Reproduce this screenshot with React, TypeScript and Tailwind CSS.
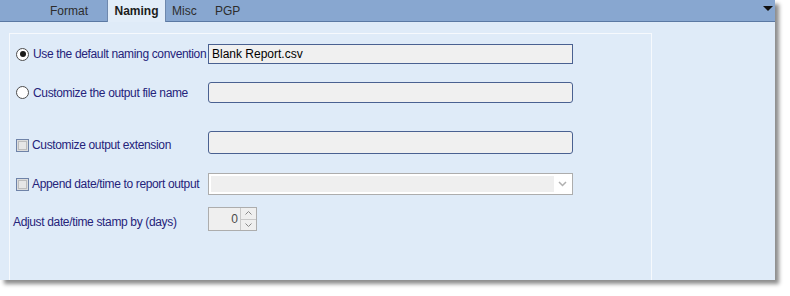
import { ReactNode } from "react";

const labelCls = "text-[12px] text-[#25237a] tracking-[-0.35px] whitespace-nowrap";

function Radio({ checked }: { checked?: boolean }) {
  return (
    <span className="w-[13px] h-[13px] rounded-full border border-[#4d4d4d] bg-white flex items-center justify-center shrink-0">
      {checked && <span className="w-[6px] h-[6px] rounded-full bg-[#1a1a1a]" />}
    </span>
  );
}

function Check() {
  return (
    <span className="w-[13px] h-[13px] border border-[#6f83a8] bg-[#dcdcdc] shrink-0 flex items-center justify-center">
      <span className="w-[9px] h-[9px] border border-[#bdbdbd] bg-[#e6e6e6]" />
    </span>
  );
}

function Row({ left, children, className }: { left: ReactNode; children?: ReactNode; className: string }) {
  return (
    <div className={`grid grid-cols-[192px_365px] ${className}`}>
      {left}
      {children}
    </div>
  );
}

export default function App() {
  return (
    <div className="w-[790px] h-[296px] bg-white relative" style={{ fontFamily: '"Liberation Sans", Arial, sans-serif' }}>
      <div className="w-[775px] h-[280px] bg-[#dfebf8] flex flex-col shadow-[4px_4px_4px_rgba(0,0,0,0.45)]">
        {/* tab strip */}
        <div className="h-[22px] bg-[#88a7d0] border-b border-[#5b79a3] flex items-end relative shrink-0">
          <div className="w-[107px] h-full flex items-center justify-end pr-[19px] text-[12px] text-[#2d2d2d]">Format</div>
          <div className="w-[59px] h-[22px] -mb-px bg-[#e2edf9] border-x border-[#6e88ad] flex items-center justify-center text-[12px] font-bold text-[#1c1c1c]">
            Naming
          </div>
          <div className="w-[49px] h-full flex items-center pl-[6px] text-[12px] text-[#2d2d2d]">Misc</div>
          <div className="h-full flex items-center text-[12px] text-[#2d2d2d]">PGP</div>
          <svg className="absolute right-[2px] top-[6px]" width="10" height="6" viewBox="0 0 10 6">
            <polygon points="0,0 10,0 5,5" fill="#111" />
          </svg>
        </div>

        {/* body */}
        <div className="flex-1 pl-[9px] pt-[11px] flex">
          <div className="w-[643px] h-full border-t border-x border-[#f6f9fd] flex flex-col pl-[6px]">
            <Row className="mt-[10px] h-[20px]" left={
              <div className="flex items-center gap-[4px]">
                <Radio checked />
                <span className={labelCls}>Use the default naming convention</span>
              </div>
            }>
              <div className="border border-[#4a6191] bg-[#f0f0f0] flex items-center pl-[3px] text-[12px] text-black">Blank Report.csv</div>
            </Row>

            <Row className="mt-[18px] h-[21px]" left={
              <div className="flex items-center gap-[4px]">
                <Radio />
                <span className={labelCls}>Customize the output file name</span>
              </div>
            }>
              <div className="border border-[#4a6191] bg-[#f0f0f0] rounded-[3px]" />
            </Row>

            <Row className="mt-[28px] h-[22px]" left={
              <div className="flex items-center gap-[3px] pt-[5px]">
                <Check />
                <span className={labelCls}>Customize output extension</span>
              </div>
            }>
              <div className="border border-[#4a6191] bg-[#f0f0f0] rounded-[3px]" />
            </Row>

            <Row className="mt-[20px] h-[22px]" left={
              <div className="flex items-center gap-[3px]">
                <Check />
                <span className={labelCls}>Append date/time to report output</span>
              </div>
            }>
              <div className="border border-[#adadad] bg-white p-[2px] flex">
                <div className="w-[343px] bg-[#efefef]" />
                <div className="flex-1 flex items-center justify-center">
                  <svg width="9" height="6" viewBox="0 0 9 6">
                    <polyline points="1,1 4.5,4.5 8,1" fill="none" stroke="#b0b0b0" strokeWidth="1.5" />
                  </svg>
                </div>
              </div>
            </Row>

            <Row className="mt-[12px] h-[20px]" left={
              <div className="flex items-center -ml-[3px] pt-[6px]">
                <span className={labelCls}>Adjust date/time stamp by (days)</span>
              </div>
            }>
              <div className="w-[49px] border border-[#adadad] bg-[#efefef] flex">
                <div className="flex-1 flex items-center justify-end pr-[2px] text-[12px] text-[#4a4a4a]">0</div>
                <div className="w-[16px] flex flex-col border-l border-[#c9c9c9]">
                  <div className="flex-1 flex items-center justify-center border-b border-[#c9c9c9]">
                    <svg width="7" height="4" viewBox="0 0 7 4"><polyline points="0.5,3.5 3.5,0.5 6.5,3.5" fill="none" stroke="#888" /></svg>
                  </div>
                  <div className="flex-1 flex items-center justify-center">
                    <svg width="7" height="4" viewBox="0 0 7 4"><polyline points="0.5,0.5 3.5,3.5 6.5,0.5" fill="none" stroke="#888" /></svg>
                  </div>
                </div>
              </div>
            </Row>
          </div>
        </div>
      </div>
    </div>
  );
}
